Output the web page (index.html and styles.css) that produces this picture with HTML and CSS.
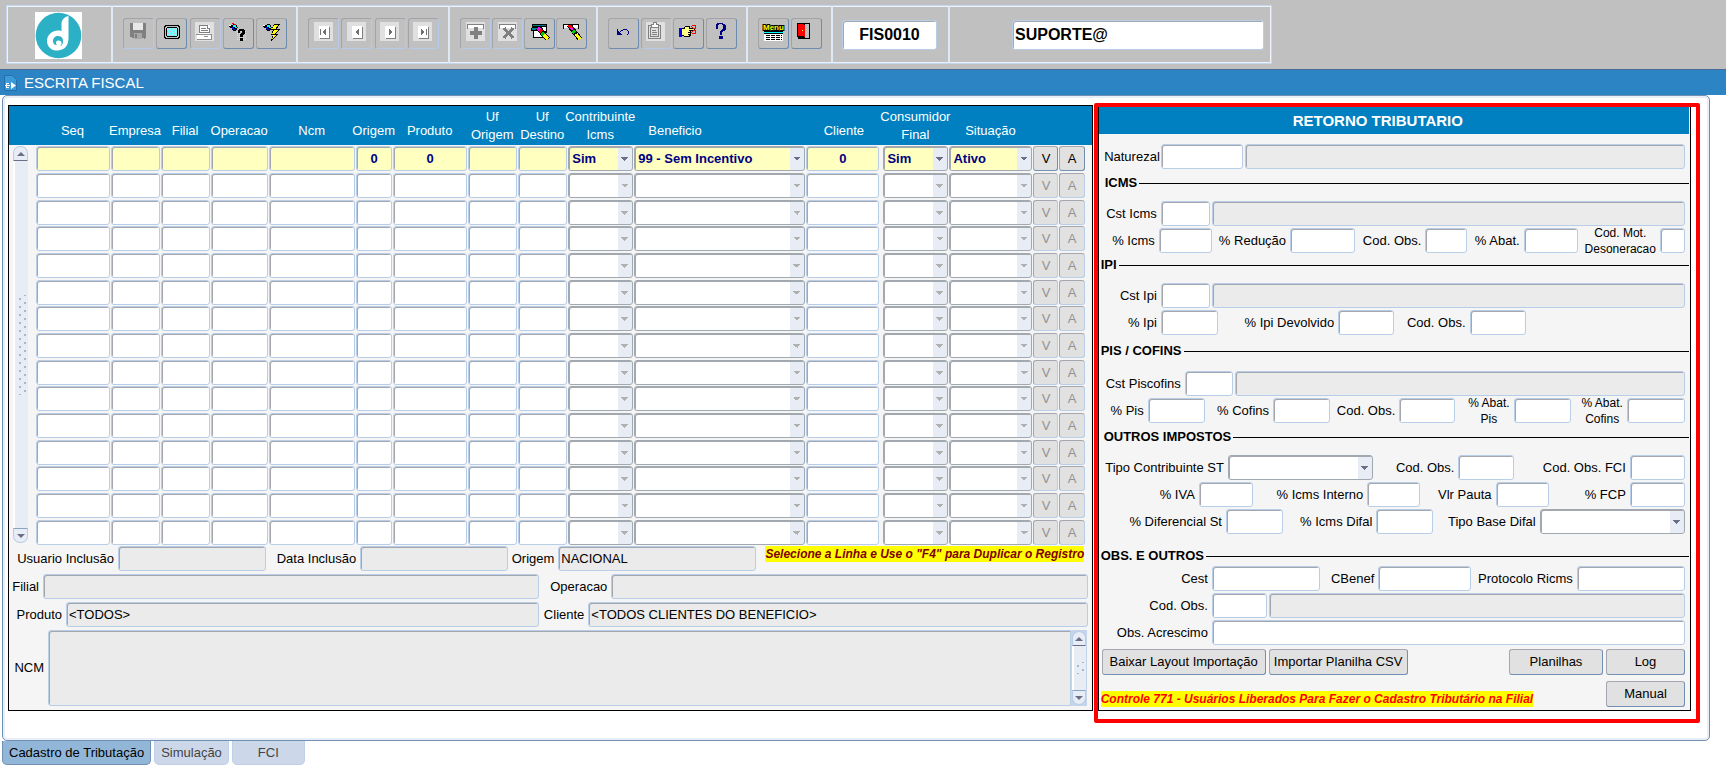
FILE: index.html
```
<!DOCTYPE html>
<html lang="pt-BR">
<head>
    <meta charset="UTF-8">
    <meta name="viewport" content="width=device-width, initial-scale=1.0">
    <title>Escrita Fiscal - FIS0010</title>
    <link rel="stylesheet" href="styles.css">
</head>
<body>

    <!-- Barra de ferramentas -->
    <header class="toolbar">
        <div class="toolbar-box">
            <div class="grupo grupo-logo">
                <svg class="logo" viewBox="0 0 47 47" role="img" aria-label="Logo">
                    <rect width="47" height="47" fill="#fff"/>
                    <circle cx="23.500" cy="23.500" r="22.800" fill="#2cb0c5"/>
                    <path d="M33.500 4 C29 5 26.500 8 26.500 12 L26.500 19 C19 17 12 22 12 29 C12 35.500 17.500 39 23 38.500 C30 38 33.500 33 33.500 26 Z" fill="#fff"/>
                    <path d="M26.500 25 C22 22.500 18 25 18 29 C18 32 20 33.500 22 33 C20 31 21 28.500 23.500 28.500 C27 28.500 27.500 32 25 34.500 C29 33 28.500 27 26.500 25 Z" fill="#2cb0c5"/>
                </svg>
            </div>
            <div class="grupo grupo-arquivo">
                <button type="button" class="tb-btn off" title="Salvar">
                    <svg viewBox="0 0 24 24"><path fill="#808080" d="M3 3h16v15h-1v1h-1v-1H5v-1H3z"/><path fill="#e8e8e8" d="M6 3h10v7H6z"/><path fill="#a8a8a8" d="M7 13h8v6H7z"/><path fill="#808080" d="M8 14h2v4H8z"/></svg>
                </button>
                <button type="button" class="tb-btn" title="Tela">
                    <svg viewBox="0 0 24 24"><path fill="#000" d="M5 5h14v1h1v12h-1v1H5v-1H4V6h1z"/><path fill="#c0c0c0" d="M6 6h12v1h1v10h-1v1H6v-1H5V7h1z"/><path fill="#000" d="M7 7h10v1h1v8h-1v1H7v-1H6V8h1z"/><path fill="#7ff" d="M7 8h10v8H7z"/><path stroke="#e0a8c8" stroke-dasharray="1 2" d="M8 9.500h9M7 11.500h9M8 13.500h9M7 15.500h9"/></svg>
                </button>
                <button type="button" class="tb-btn off" title="Imprimir">
                    <svg viewBox="0 0 24 24"><path fill="#e0e0e0" d="M2 2h19v19H2z"/><path fill="#fff" d="M6 5h9l2 2v7H6z"/><path fill="#808080" d="M6 5h1v8H6zM7 5h8v1H7zM14 6h1v2h2v5h-1V9h-2zM8 8h5v1H8zM8 10h7v1H8zM6 12h11v1H6z"/><path fill="#fff" d="M4 14h14v5H4z"/><path fill="#909090" d="M3 14h16v1H3zM4 19h15v1H4zM18 15h1v4h-1zM11 16h4v1h-4z"/></svg>
                </button>
                <button type="button" class="tb-btn" title="Entrar consulta">
                    <svg viewBox="0 0 24 24"><path stroke="#ff0" stroke-dasharray="1 1" d="M11 11.500h10M11 13.500h10M11 15.500h10M11 17.500h10M11 19.500h10"/><path fill="#000" d="M3 6h2V5h2V4h3v1h1v2h1v1h-1v2h-1v1H7v-1H6V8H4V7H3z"/><path fill="#00f" d="M6 7h2v2h1v1H7V9H6z"/><path fill="#0ff" d="M7 5h3v2h1v1H9V7H7z"/><path fill="#f00" d="M6 3h2v1H6zM8 4h2v1H8z"/><path fill="#fff" d="M3 5h2v1H3z"/><path fill="#000" d="M13 9h5v1h1v4h-1v1h-1v2h-3v-3h1v-1h1v-2h-2v2h-2v-3h1zM14 18h3v3h-3z"/></svg>
                </button>
                <button type="button" class="tb-btn" title="Executar consulta">
                    <svg viewBox="0 0 24 24"><path fill="#000" d="M3 6h2V5h2V4h3v1h1v2h1v1h-1v2h-1v1H7v-1H6V8H4V7H3z"/><path fill="#00f" d="M6 7h2v2h1v1H7V9H6z"/><path fill="#0ff" d="M7 5h3v2h1v1H9V7H7z"/><path fill="#fff" d="M3 5h2v1H3z"/><path fill="#000" d="M14 4h6l-3 5h3l-4 5h2l-7 7 2-6h-2l2-5h-2z"/><path fill="#ff0" d="M14 5h4l-3 5h3l-4 5h2l-4 4 2-5h-2l3-5h-3z"/></svg>
                </button>
            </div>
            <div class="grupo grupo-nav">
                <button type="button" class="tb-btn off" title="Primeiro">
                    <svg viewBox="0 0 24 24"><path fill="#e0e0e0" d="M2 2h19v19H2z"/><path fill="#808080" d="M8 7h10v12H8z"/><path fill="#fff" d="M7 6h10v12H7z"/><path fill="#707070" d="M8 9h1v6H8zM14 9v6l-4-3z"/></svg>
                </button>
                <button type="button" class="tb-btn off" title="Anterior">
                    <svg viewBox="0 0 24 24"><path fill="#e0e0e0" d="M2 2h19v19H2z"/><path fill="#808080" d="M8 7h10v12H8z"/><path fill="#fff" d="M7 6h10v12H7z"/><path fill="#707070" d="M14 9v6l-4-3z"/></svg>
                </button>
                <button type="button" class="tb-btn off" title="Próximo">
                    <svg viewBox="0 0 24 24"><path fill="#e0e0e0" d="M2 2h19v19H2z"/><path fill="#808080" d="M8 7h10v12H8z"/><path fill="#fff" d="M7 6h10v12H7z"/><path fill="#707070" d="M11 9v6l4-3z"/></svg>
                </button>
                <button type="button" class="tb-btn off" title="Último">
                    <svg viewBox="0 0 24 24"><path fill="#e0e0e0" d="M2 2h19v19H2z"/><path fill="#808080" d="M8 7h10v12H8z"/><path fill="#fff" d="M7 6h10v12H7z"/><path fill="#707070" d="M10 9v6l4-3zM15 9h1v6h-1z"/></svg>
                </button>
            </div>
            <div class="grupo grupo-edicao">
                <button type="button" class="tb-btn off" title="Inserir registro">
                    <svg viewBox="0 0 24 24"><path fill="#e0e0e0" d="M2 2h19v19H2z"/><path fill="#808080" d="M3 4h17v5h-1V5H4v4H3z"/><path fill="#fff" d="M4 5h15v3H4z"/><path fill="#808080" d="M10 7h4v4h4v4h-4v4h-4v-4H6v-4h4z"/></svg>
                </button>
                <button type="button" class="tb-btn off" title="Excluir registro">
                    <svg viewBox="0 0 24 24"><path fill="#e0e0e0" d="M2 2h19v19H2z"/><path fill="#808080" d="M3 4h17v5h-1V5H4v4H3z"/><path fill="#fff" d="M4 5h15v3H4z"/><path stroke="#808080" stroke-width="3" d="M8 8l9 10M17 8L8 18"/></svg>
                </button>
                <button type="button" class="tb-btn" title="Limpar tela">
                    <svg viewBox="0 0 24 24"><path fill="#000" d="M4 4h15v9h-3v5H5v-7H3V8h1z"/><path fill="#008080" d="M5 5h13v1H5zM4 8h10v2H4z"/><path fill="#fff" d="M6 11h4l4 6H6zM14 7h4v4h-2z"/><path stroke="#000" stroke-width="5" d="M10 8l10 11"/><path stroke="#f0f" stroke-width="3" d="M10 8l3 3"/><path stroke="#f00" stroke-width="3" d="M12 10l2 2"/><path stroke="#0c0" stroke-width="3" d="M14 13l2 2"/><path stroke="#ff0" stroke-width="3" d="M16 15l4 4"/></svg>
                </button>
                <button type="button" class="tb-btn" title="Limpar registro">
                    <svg viewBox="0 0 24 24"><path fill="#000" d="M3 4h16v5h-1V5H4v4H3z"/><path fill="#fff" d="M4 5h14v3H4z"/><path stroke="#000" stroke-width="5" d="M9 5l11 14"/><path stroke="#f00" stroke-width="3" d="M9 5l3 4"/><path stroke="#f0f" stroke-width="2" d="M11 8l2 2"/><path stroke="#0c0" stroke-width="3" d="M13 11l2 2"/><path stroke="#ff0" stroke-width="3" d="M16 14l4 5"/></svg>
                </button>
            </div>
            <div class="grupo grupo-apoio">
                <button type="button" class="tb-btn" title="Desfazer">
                    <svg viewBox="0 0 24 24"><path fill="#000080" d="M5 9h1v2h1v1h1v1h1v1h1v1H5zM8 11h1v1H8zM9 10h2v1H9zM11 9h4v1h-4zM15 10h1v1h-1zM16 11h1v3h-1zM15 14h1v1h-1z"/></svg>
                </button>
                <button type="button" class="tb-btn off" title="Colar">
                    <svg viewBox="0 0 24 24"><path fill="#e0e0e0" d="M2 2h19v19H2z"/><path fill="none" stroke="#808080" d="M4.500 5.500h12v13h-12zM6.500 7.500h8v9h-8z"/><path fill="#fff" stroke="#808080" d="M7.500 4.500h2v-2h3v2h2v3h-7z"/><path stroke="#808080" d="M8 10.500h4M8 12.500h5M8 14.500h5"/></svg>
                </button>
                <button type="button" class="tb-btn" title="Recortar">
                    <svg viewBox="0 0 24 24"><path fill="#000" d="M5 8h2V7h1V6h5v2h5v3h-4v5h-1v1H7v-1H5z"/><path fill="#00f" d="M2 8h3v9H2z"/><path fill="#ff8" d="M5 9h3V7h4v2h5v1h-5v1h1v1h-2v1h2v1h-2v1h1v1H7v-1H5z"/><path fill="none" stroke="#f00" d="M15.500 5.500h3v3h-2l-2-2zM15.500 13.500h3v-3h-2l-2 2z"/></svg>
                </button>
                <button type="button" class="tb-btn" title="Ajuda">
                    <svg viewBox="0 0 24 24"><path fill="#000080" d="M8 3h6v1h2v1h1v5h-1v1h-2v1h-1v3h-2v-4h1v-1h1V9h1V5h-1V4h-3v1H9v4H7V4h1zM10 16h4v3h-4z"/></svg>
                </button>
            </div>
            <div class="grupo grupo-menu">
                <button type="button" class="tb-btn" title="Menu">
                    <svg viewBox="0 0 24 24"><path fill="#000" d="M2 11h19v3H2z"/><path fill="#0ff" d="M2 12h19v1H2z"/><path fill="#fff" d="M2 14h19v7H2z"/><path stroke="#000" stroke-dasharray="4 1" d="M4 15.500h16M4 17.500h16M4 19.500h16"/><text class="menu-txt" x="1" y="10">Menu</text></svg>
                </button>
                <button type="button" class="tb-btn" title="Sair">
                    <svg viewBox="0 0 24 24"><path fill="#000" d="M2 3h13v16H3v-2H2z"/><path fill="#c0c0c0" d="M10 4h4v14h-4z"/><path fill="#f00" d="M3 4h5l2 2v12l-2-2H3z"/><path fill="#ff0" d="M7 10h1v1H7z"/></svg>
                </button>
            </div>
            <div class="grupo grupo-programa">
                <input type="text" class="tb-campo centro" value="FIS0010" aria-label="Programa" readonly>
            </div>
            <div class="grupo grupo-usuario">
                <input type="text" class="tb-campo" value="SUPORTE@" aria-label="Usuário" readonly>
            </div>
        </div>
    </header>

    <div class="titulo">
        <svg class="titulo-icone" viewBox="0 0 13 16"><path fill="#3c9ad8" stroke="#2470ac" d="M.5.500h8l4 4v11H.5z"/><path fill="#fff" d="M7 7l5 3.500L7 14zM2 8h3v1H3v3h2v1H2zM1 10h5v1H1z"/></svg>
        <h1>ESCRITA FISCAL</h1>
    </div>

    <main class="janela">
        <!-- Cadastro -->
        <section class="painel painel-cadastro">
            <div class="grade-area">
                <div class="rolagem">
                    <button type="button" class="seta seta-cima" aria-label="Rolar para cima"></button>
                    <div class="trilho"><span class="pega"></span></div>
                    <button type="button" class="seta seta-baixo" aria-label="Rolar para baixo"></button>
                </div>
                <table class="grade">
                    <colgroup>
                        <col class="c75"><col class="c50"><col class="c50"><col class="c58"><col class="c87"><col class="c37"><col class="c75"><col class="c50"><col class="c50"><col class="c66"><col class="c172"><col class="c77"><col class="c66"><col class="c84"><col class="c26"><col class="c26">
                    </colgroup>
                    <thead>
                        <tr>
                            <th><span>Seq</span></th>
                            <th><span>Empresa</span></th>
                            <th><span>Filial</span></th>
                            <th><span>Operacao</span></th>
                            <th><span>Ncm</span></th>
                            <th><span>Origem</span></th>
                            <th><span>Produto</span></th>
                            <th class="duplo"><span>Uf<br>Origem</span></th>
                            <th class="duplo"><span>Uf<br>Destino</span></th>
                            <th class="duplo"><span>Contribuinte<br>Icms</span></th>
                            <th class="esq"><span>Beneficio</span></th>
                            <th><span>Cliente</span></th>
                            <th class="duplo"><span>Consumidor<br>Final</span></th>
                            <th><span>Situação</span></th>
                            <th></th>
                            <th></th>
                        </tr>
                    </thead>
                    <tbody id="linhas"></tbody>
                </table>
            </div>

            <div class="linha l-inclusao">
                <label for="usuarioInclusao">Usuario Inclusão</label>
                <input type="text" id="usuarioInclusao" readonly>
                <label for="dataInclusao">Data Inclusão</label>
                <input type="text" id="dataInclusao" readonly>
                <label for="origem">Origem</label>
                <input type="text" id="origem" value="NACIONAL" readonly>
                <p class="aviso aviso-linha"><mark>Selecione a Linha e Use o "F4" para Duplicar o Registro</mark></p>
            </div>
            <div class="linha l-filial">
                <label for="filial">Filial</label>
                <input type="text" id="filial" readonly>
                <label for="operacao">Operacao</label>
                <input type="text" id="operacao" readonly>
            </div>
            <div class="linha l-produto">
                <label for="produto">Produto</label>
                <input type="text" id="produto" value="&lt;TODOS&gt;" readonly>
                <label for="cliente">Cliente</label>
                <input type="text" id="cliente" value="&lt;TODOS CLIENTES DO BENEFICIO&gt;" readonly>
            </div>
            <div class="linha l-ncm">
                <label for="ncm">NCM</label>
                <div class="ncm-box">
                    <textarea id="ncm" readonly></textarea>
                    <div class="rolagem rolagem-ncm">
                        <button type="button" class="seta seta-cima" aria-label="NCM para cima"></button>
                        <div class="trilho"><span class="pega pega-curta"></span></div>
                        <button type="button" class="seta seta-baixo" aria-label="NCM para baixo"></button>
                    </div>
                </div>
            </div>
        </section>

        <!-- Retorno tributario -->
        <div class="destaque">
            <section class="painel painel-retorno">
                <h2>RETORNO TRIBUTARIO</h2>
                <div class="linha l-natureza">
                    <label for="natureza">Naturezal</label>
                    <input type="text" id="natureza">
                    <input type="text" class="desc" aria-label="Descrição da natureza" readonly>
                </div>

                <h3 class="s-icms">ICMS</h3>
                <div class="linha l-cst">
                    <label for="cstIcms">Cst Icms</label>
                    <input type="text" id="cstIcms">
                    <input type="text" class="desc" aria-label="Descrição Cst Icms" readonly>
                </div>
                <div class="linha l-icms">
                    <label for="pIcms">% Icms</label>
                    <input type="text" id="pIcms">
                    <label for="pReducao">% Redução</label>
                    <input type="text" id="pReducao">
                    <label for="obsIcms">Cod. Obs.</label>
                    <input type="text" id="obsIcms">
                    <label for="pAbat">% Abat.</label>
                    <input type="text" id="pAbat">
                    <label for="motDes" class="duas">Cod. Mot.<br>Desoneracao</label>
                    <input type="text" id="motDes">
                </div>

                <h3 class="s-ipi">IPI</h3>
                <div class="linha l-cst">
                    <label for="cstIpi">Cst Ipi</label>
                    <input type="text" id="cstIpi">
                    <input type="text" class="desc" aria-label="Descrição Cst Ipi" readonly>
                </div>
                <div class="linha l-ipi">
                    <label for="pIpi">% Ipi</label>
                    <input type="text" id="pIpi">
                    <label for="pIpiDev">% Ipi Devolvido</label>
                    <input type="text" id="pIpiDev">
                    <label for="obsIpi">Cod. Obs.</label>
                    <input type="text" id="obsIpi">
                </div>

                <h3 class="s-pis">PIS / COFINS</h3>
                <div class="linha l-cstpis">
                    <label for="cstPis">Cst Piscofins</label>
                    <input type="text" id="cstPis">
                    <input type="text" class="desc" aria-label="Descrição Cst Piscofins" readonly>
                </div>
                <div class="linha l-pis">
                    <label for="pPis">% Pis</label>
                    <input type="text" id="pPis">
                    <label for="pCofins">% Cofins</label>
                    <input type="text" id="pCofins">
                    <label for="obsPis">Cod. Obs.</label>
                    <input type="text" id="obsPis">
                    <label for="abatPis" class="duas">% Abat.<br>Pis</label>
                    <input type="text" id="abatPis">
                    <label for="abatCofins" class="duas">% Abat.<br>Cofins</label>
                    <input type="text" id="abatCofins">
                </div>

                <h3 class="s-outros">OUTROS IMPOSTOS</h3>
                <div class="linha l-tipo">
                    <label for="tipoSt">Tipo Contribuinte ST</label>
                    <select id="tipoSt"><option></option></select>
                    <label for="obsSt">Cod. Obs.</label>
                    <input type="text" id="obsSt">
                    <label for="obsFci">Cod. Obs. FCI</label>
                    <input type="text" id="obsFci">
                </div>
                <div class="linha l-iva">
                    <label for="iva">% IVA</label>
                    <input type="text" id="iva">
                    <label for="icmsInterno">% Icms Interno</label>
                    <input type="text" id="icmsInterno">
                    <label for="pauta">Vlr Pauta</label>
                    <input type="text" id="pauta">
                    <label for="fcp">% FCP</label>
                    <input type="text" id="fcp">
                </div>
                <div class="linha l-difal">
                    <label for="difSt">% Diferencial St</label>
                    <input type="text" id="difSt">
                    <label for="icmsDifal">% Icms Difal</label>
                    <input type="text" id="icmsDifal">
                    <label for="baseDifal">Tipo Base Difal</label>
                    <select id="baseDifal"><option></option></select>
                </div>

                <h3 class="s-obs">OBS. E OUTROS</h3>
                <div class="linha l-cest">
                    <label for="cest">Cest</label>
                    <input type="text" id="cest">
                    <label for="cbenef">CBenef</label>
                    <input type="text" id="cbenef">
                    <label for="ricms">Protocolo Ricms</label>
                    <input type="text" id="ricms">
                </div>
                <div class="linha l-codobs">
                    <label for="codObs">Cod. Obs.</label>
                    <input type="text" id="codObs">
                    <input type="text" class="desc" aria-label="Descrição Cod. Obs." readonly>
                </div>
                <div class="linha l-acrescimo">
                    <label for="acrescimo">Obs. Acrescimo</label>
                    <input type="text" id="acrescimo">
                </div>

                <div class="botoes">
                    <button type="button" class="btn b-layout">Baixar Layout Importação</button>
                    <button type="button" class="btn b-csv">Importar Planilha CSV</button>
                    <button type="button" class="btn b-planilhas">Planilhas</button>
                    <button type="button" class="btn b-log">Log</button>
                </div>
                <div class="rodape">
                    <p class="aviso aviso-controle"><mark>Controle 771 - Usuários Liberados Para Fazer o Cadastro Tributário na Filial</mark></p>
                    <button type="button" class="btn b-log">Manual</button>
                </div>
            </section>
        </div>
    </main>

    <!-- Abas -->
    <nav class="abas">
        <button type="button" class="aba ativa">Cadastro de Tributação</button>
        <button type="button" class="aba">Simulação</button>
        <button type="button" class="aba larga">FCI</button>
    </nav>

    <script>
        // Colunas da grade: t = texto, s = lista, b = botão
        const colunas = [
            ["t", "Seq", ""], ["t", "Empresa", ""], ["t", "Filial", ""], ["t", "Operacao", ""],
            ["t", "Ncm", ""], ["t", "Origem", "0"], ["t", "Produto", "0"], ["t", "Uf Origem", ""],
            ["t", "Uf Destino", ""], ["s", "Contribuinte Icms", "Sim"], ["s", "Beneficio", "99 - Sem Incentivo"],
            ["t", "Cliente", "0"], ["s", "Consumidor Final", "Sim"], ["s", "Situação", "Ativo"],
            ["b", "V"], ["b", "A"]
        ];

        function montarGrade(total) {
            let html = "";
            for (let i = 0; i < total; i++) {
                const ativa = i === 0;
                html += ativa ? '<tr class="atual">' : "<tr>";
                colunas.forEach(([tipo, nome, valor]) => {
                    const rotulo = `${nome} linha ${i + 1}`;
                    const conteudo = ativa ? valor : "";
                    const classe = nome === "Cliente" ? ' class="folga"' : "";
                    if (tipo === "t") {
                        html += `<td${classe}><input type="text" value="${conteudo}" aria-label="${rotulo}"></td>`;
                    } else if (tipo === "s") {
                        html += `<td><select aria-label="${rotulo}"${ativa ? "" : " disabled"}><option>${conteudo}</option></select></td>`;
                    } else {
                        html += `<td><button type="button" class="btn"${ativa ? "" : " disabled"}>${nome}</button></td>`;
                    }
                });
                html += "</tr>";
            }
            document.getElementById("linhas").innerHTML = html;
        }

        montarGrade(15);
    </script>
</body>
</html>
```

FILE: styles.css
```
* {
    box-sizing: border-box;
}

body {
    margin: 0;
    background: #fff;
    color: #000;
    font-family: "Liberation Sans", Arial, sans-serif;
    font-size: 13px;
    line-height: 16px;
}

h1, h2, h3, p {
    margin: 0;
}

input, select, textarea, button {
    font: inherit;
    color: inherit;
    margin: 0;
    border-radius: 3px;
}

/* Barra de ferramentas */
.toolbar {
    background: #c0c0c0;
    padding: 5px 6px;
    border-bottom: 1px solid #4a6a98;
}

.toolbar-box {
    display: flex;
    width: fit-content;
    height: 59px;
    border: 1px solid #c4d6ee;
    box-shadow: inset 0 0 0 1px #eef3fa;
}

.grupo {
    display: flex;
    justify-content: space-between;
    align-items: flex-start;
    padding: 12px 9px 0 10px;
    border-right: 2px solid #dfe9f6;
}

.grupo:last-child {
    border-right: none;
}

.grupo-logo {
    width: 106px;
    padding: 6px 0 0 28px;
}

.grupo-arquivo {
    width: 185px;
}

.grupo-nav {
    width: 152px;
}

.grupo-edicao {
    width: 148px;
}

.grupo-apoio {
    width: 150px;
}

.grupo-menu {
    width: 85px;
}

.grupo-programa {
    width: 117px;
    padding: 14px 11px 0 9px;
}

.grupo-usuario {
    width: 321px;
    padding: 14px 7px 0 62px;
}

.logo {
    width: 47px;
    height: 47px;
}

.tb-btn {
    display: flex;
    justify-content: center;
    width: 31px;
    height: 31px;
    padding: 1px 0 0;
    background: #c0c0c0;
    border: 1px solid #a4a4a8;
    border-right-color: #6c8cb0;
    border-bottom-color: #6c8cb0;
}

.tb-btn.off {
    border-right-color: #b4cae8;
    border-bottom-color: #b4cae8;
}

.tb-btn svg {
    width: 24px;
    height: 24px;
    flex-shrink: 0;
    shape-rendering: crispEdges;
}

.menu-txt {
    font-size: 8px;
    font-weight: bold;
    fill: #ff0;
    stroke: #000;
    stroke-width: 2px;
    paint-order: stroke;
}

.tb-campo {
    width: 100%;
    background: #fff;
    font-size: 16px;
    font-weight: bold;
}

.centro {
    text-align: center;
}

/* Titulo */
.titulo {
    display: flex;
    align-items: center;
    gap: 7px;
    height: 25px;
    padding-left: 4px;
    background: #2c84c4;
}

.titulo-icone {
    width: 13px;
    height: 16px;
}

.titulo h1 {
    color: #fff;
    font-size: 15px;
    font-weight: normal;
}

/* Janela */
.janela {
    display: grid;
    grid-template-columns: minmax(0, 1084fr) minmax(0, 606fr);
    gap: 1px;
    align-items: start;
    margin: 0 16px 0 2px;
    padding: 7px 9px 17px 5px;
    border: 1px solid #7090b4;
    border-radius: 5px;
    box-shadow: inset 0 0 0 2px #e9eef7;
}

.painel {
    background: #f5f5f5;
    border: 1px solid #000;
}

.painel-cadastro {
    margin-top: 2px;
    padding-bottom: 4px;
}

.destaque {
    padding: 0 5px 8px 0;
    border: 4px solid #f00;
    border-radius: 2px;
}

.painel-retorno {
    border-top: none;
    padding-bottom: 3px;
}

/* Grade */
.grade-area {
    display: flex;
    padding-right: 6px;
    background: linear-gradient(#0080c0 39px, transparent 39px);
}

.grade {
    width: 100%;
    table-layout: fixed;
    border-collapse: collapse;
}

.c26 { width: 26px; }
.c37 { width: 37px; }
.c50 { width: 50px; }
.c58 { width: 58px; }
.c66 { width: 66px; }
.c75 { width: 75px; }
.c77 { width: 77px; }
.c84 { width: 84px; }
.c87 { width: 87px; }
.c172 { width: 172px; }

.grade th {
    height: 40px;
    padding: 0 2px 6px 0;
    color: #fff;
    font-weight: normal;
    line-height: 18px;
    vertical-align: bottom;
    white-space: nowrap;
}

.grade th.duplo {
    padding-bottom: 2px;
}

.grade th span {
    display: flex;
    justify-content: center;
}

.grade th.duplo span {
    display: block;
    margin: 0 -4px;
}

.grade th.esq span {
    justify-content: flex-start;
    padding-left: 14px;
}

.grade tr {
    height: 27px;
}

.grade tr:nth-child(3n) {
    height: 26px;
}

.grade td {
    padding: 0 1px 0 0;
    vertical-align: top;
}

.grade td.folga {
    padding-right: 4px;
}

.grade input, .grade select, .grade button {
    display: block;
    width: 100%;
}

.grade input {
    text-align: center;
}

.atual input, .atual select {
    background-color: #ffffc0;
    color: #000080;
    font-weight: bold;
}

/* Campos */
input[type="text"], select, textarea {
    min-width: 0;
    height: 25px;
    border: 1px solid #b8cde8;
    box-shadow: inset 1px 1px 0 #a4a8ae;
    outline: none;
}

input[type="text"] {
    padding: 0 2px;
}

input.tb-campo {
    height: 30px;
}

.linha input[readonly], textarea {
    background: #ebebeb;
}

select {
    appearance: none;
    padding: 0 16px 0 3px;
    border-color: #a0a8b0;
    background-color: #fff;
    background-image:
        linear-gradient(45deg, transparent 50%, #6a6e88 50%),
        linear-gradient(135deg, #6a6e88 50%, transparent 50%),
        linear-gradient(#e8edf5, #e8edf5);
    background-size: 4px 4px, 4px 4px, 14px 100%;
    background-position: right 7px top 10px, right 3px top 10px, right 0 top 0;
    background-repeat: no-repeat;
}

select:disabled {
    opacity: 1;
    background-image:
        linear-gradient(45deg, transparent 50%, #b0b0b0 50%),
        linear-gradient(135deg, #b0b0b0 50%, transparent 50%),
        linear-gradient(#e8edf5, #e8edf5);
}

.btn {
    height: 26px;
    padding: 0;
    background: #e1e1e1;
    border: 1px solid #a4a8ae;
    border-right-color: #7090b4;
    border-bottom-color: #7090b4;
    white-space: nowrap;
}

.grade .btn {
    height: 25px;
}

.btn:disabled {
    color: #929292;
    border-right-color: #b8cde8;
    border-bottom-color: #b8cde8;
}

/* Barras de rolagem */
.rolagem {
    display: flex;
    flex-direction: column;
    flex: none;
    width: 27px;
    padding: 40px 8px 3px 4px;
}

.seta {
    height: 15px;
    padding: 0;
    background: #e8edf5;
    border: 1px solid #b8cde8;
}

.seta::before {
    content: "";
    display: block;
    width: 0;
    margin: 0 auto;
    border: 4px solid transparent;
}

.seta-cima {
    border-radius: 7px 7px 0 0;
    border-bottom-color: #6a6e88;
}

.seta-cima::before {
    border-top: none;
    border-bottom-color: #6a6e88;
}

.seta-baixo {
    border-radius: 0 0 7px 7px;
    border-top-color: #8ca4c0;
}

.seta-baixo::before {
    border-bottom: none;
    border-top-color: #6a6e88;
}

.trilho {
    flex: 1;
    display: flex;
    justify-content: center;
    align-items: center;
    background: #e8edf5;
    border-left: 2px solid #fff;
}

.pega {
    width: 10px;
    height: 100px;
    background-image: radial-gradient(circle, #a4b8d0 1px, transparent 1px), radial-gradient(circle, #a4b8d0 1px, transparent 1px);
    background-size: 10px 8px;
    background-position: -2px 0, 3px 4px;
}

.pega-curta {
    height: 12px;
}

/* Linhas de formulario */
.linha {
    display: grid;
    align-items: center;
}

.linha label {
    padding-right: 4px;
    text-align: right;
    white-space: nowrap;
}

.painel-cadastro .linha {
    margin-bottom: 3px;
}

.l-inclusao {
    grid-template-columns: 109fr 148fr 94fr 148fr 50fr 198fr 335fr;
}

.l-filial {
    grid-template-columns: 34fr 496fr 72fr 476fr 4fr;
}

.l-produto {
    grid-template-columns: 57fr 473fr 49fr 499fr 4fr;
}

.painel-cadastro .l-ncm {
    grid-template-columns: 39fr 1038fr 5fr;
    margin-bottom: 0;
}

.ncm-box {
    display: flex;
    height: 76px;
}

.ncm-box textarea {
    flex: 1;
    height: 100%;
    border-radius: 3px 0 0 3px;
    resize: none;
}

.rolagem-ncm {
    width: 16px;
    padding: 1px;
    background: #c4d4ea;
}

.painel-retorno .linha {
    padding-right: 5px;
}

.painel-retorno .linha + .linha {
    margin-top: 2px;
}

.linha label.duas {
    justify-self: end;
    font-size: 12px;
    text-align: center;
    margin: -4px 0;
}

.desc {
    margin-left: 2px;
}

.painel-retorno h2 {
    height: 27px;
    margin: 0 1px 10px 0;
    padding-right: 32px;
    background: #0080c0;
    color: #fff;
    font-size: 15px;
    line-height: 27px;
    text-align: center;
}

.painel-retorno h3 {
    display: flex;
    align-items: center;
    gap: 2px;
    margin: 6px 1px 10px 2px;
    font-size: 13px;
    line-height: 16px;
}

.painel-retorno h3::after {
    content: "";
    flex: 1;
    height: 1px;
    background: #000;
}

.painel-retorno .s-icms {
    margin-left: 6px;
}

.painel-retorno .s-ipi {
    margin-top: 4px;
}

.painel-retorno .s-pis {
    margin-top: 8px;
    margin-bottom: 12px;
}

.painel-retorno .s-outros {
    margin-left: 5px;
}

.painel-retorno .s-obs {
    margin-top: 14px;
    margin-bottom: 2px;
}

.l-natureza { grid-template-columns: 62fr 82fr 441fr; }
.l-cst { grid-template-columns: 62fr 49fr 474fr; }
.l-icms { grid-template-columns: 60fr 53fr 78fr 65fr 70fr 42fr 56fr 54fr 82fr 25fr; }
.l-ipi { grid-template-columns: 62fr 57fr 120fr 56fr 75fr 56fr 159fr; }
.l-cstpis { grid-template-columns: 86fr 48fr 451fr; }
.l-pis { grid-template-columns: 49fr 57fr 68fr 57fr 69fr 56fr 58fr 57fr 56fr 58fr; }
.l-tipo { grid-template-columns: 129fr 145fr 85fr 55fr 116fr 55fr; }
.l-iva { grid-template-columns: 100fr 54fr 114fr 53fr 75fr 53fr 81fr 55fr; }
.l-difal { grid-template-columns: 127fr 57fr 93fr 57fr 106fr 145fr; }
.l-cest { grid-template-columns: 113fr 108fr 58fr 92fr 106fr 108fr; }
.l-codobs { grid-template-columns: 113fr 55fr 417fr; }
.l-acrescimo { grid-template-columns: 113fr 472fr; }

.linha.l-natureza label {
    padding-right: 1px;
}

/* Avisos e botoes */
.aviso {
    font-size: 12px;
    font-style: italic;
    font-weight: bold;
    white-space: nowrap;
}

.aviso mark {
    display: inline-block;
    background: #ff0;
    color: inherit;
}

.aviso-linha {
    align-self: start;
    padding-left: 9px;
    color: #800000;
}

.aviso-controle {
    color: #f00;
}

.botoes {
    display: flex;
    gap: 3px;
    margin-top: 4px;
    padding: 0 5px 0 3px;
}

.b-layout { width: 164px; }
.b-csv { width: 139px; }
.b-planilhas { width: 94px; margin-left: auto; }
.b-log { width: 79px; }

.rodape {
    display: flex;
    justify-content: space-between;
    align-items: flex-end;
    margin-top: 6px;
    padding: 0 5px 0 2px;
}

/* Abas */
.abas {
    display: flex;
    gap: 3px;
    margin-left: 2px;
}

.aba {
    height: 24px;
    padding: 0 6px;
    background: #ccd8ea;
    border: 1px solid #c0d0e8;
    border-top: none;
    border-radius: 0 0 5px 5px;
    color: #444;
}

.aba.ativa {
    background: #92b6d8;
    border-color: #7090b4;
    color: #000;
}

.aba.larga {
    width: 73px;
}
```
